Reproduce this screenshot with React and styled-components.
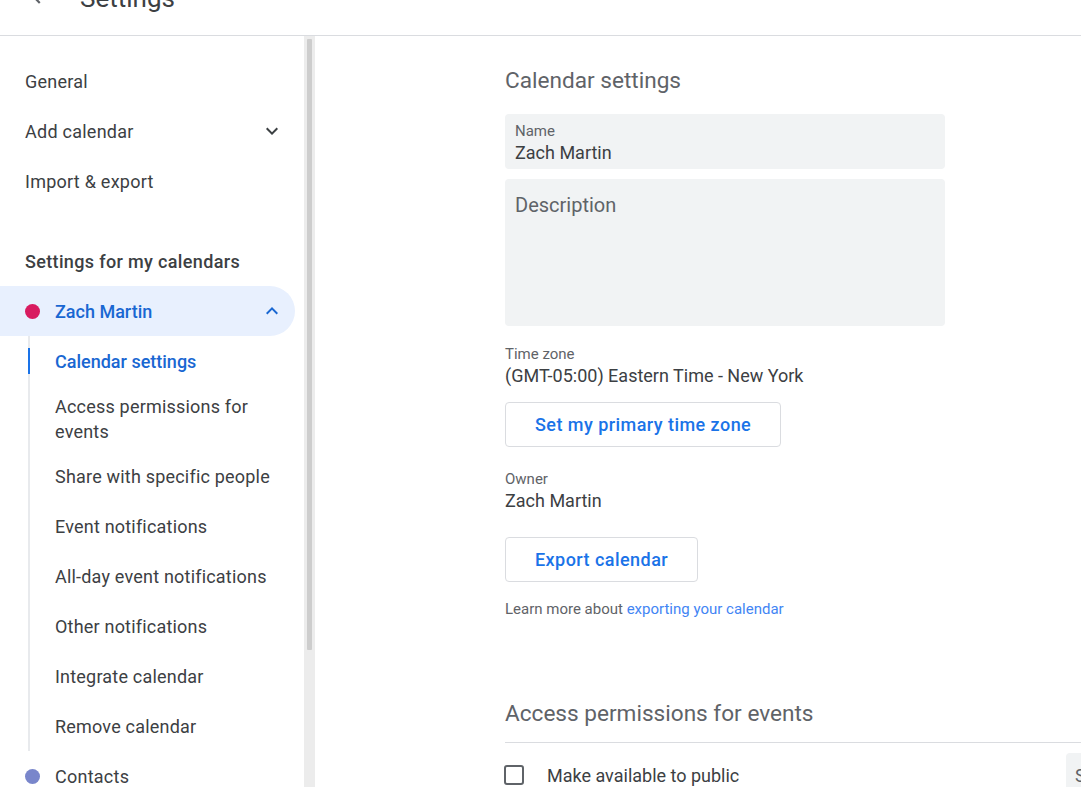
import React from "react";
import styled, { createGlobalStyle } from "styled-components";

const Global = createGlobalStyle`
  html, body { margin: 0; padding: 0; height: 100%; overflow: hidden; background: #fff; }
  body { font-family: Roboto, "Noto Sans", Arial, sans-serif; color: #3c4043; }
  #root { height: 100%; }
  * { box-sizing: border-box; }
`;

const Page = styled.div`
  height: 100vh;
  display: flex;
  flex-direction: column;
`;

const Header = styled.header`
  height: 36px;
  flex-shrink: 0;
  overflow: hidden;
  border-bottom: 1px solid #dadce0;
`;

const HeaderRow = styled.div`
  display: flex;
  align-items: center;
  height: 40px;
  margin-top: -22px;
  padding-left: 26px;
  gap: 28px;
`;

const BackIcon = styled.svg`
  width: 26px;
  height: 26px;
  fill: #5f6368;
  margin-bottom: 6px;
`;

const Title = styled.div`
  font-size: 26px;
  color: #3c4043;
`;

const Body = styled.div`
  flex: 1;
  display: flex;
  overflow: hidden;
`;

const Sidebar = styled.nav`
  width: 304px;
  flex-shrink: 0;
  padding-top: 20px;
`;

const Track = styled.div`
  width: 11px;
  flex-shrink: 0;
  background: #ececec;
  padding: 3px 3px 0 3px;
`;

const Thumb = styled.div`
  width: 5px;
  height: 611px;
  background: #cdcdcd;
  border-radius: 1px;
`;

const NavItem = styled.div`
  display: flex;
  align-items: center;
  min-height: 50px;
  padding: 7.5px ${(p) => (p.$selected ? 11 : 20)}px 7.5px 25px;
  font-size: 18px;
  line-height: 25px;
  letter-spacing: ${(p) => (p.$active ? 0 : p.$bold ? 0.35 : 0.25)}px;
  color: ${(p) => (p.$active ? "#1967d2" : "#3c4043")};
  font-weight: ${(p) => (p.$bold || p.$active ? 500 : 400)};
  margin-top: ${(p) => p.$gapTop || 0}px;
  background: ${(p) => (p.$selected ? "#e8f0fe" : "transparent")};
  border-radius: ${(p) => (p.$selected ? "0 25px 25px 0" : "0")};
  margin-right: ${(p) => (p.$selected ? 9 : 0)}px;
`;

const Dot = styled.span`
  width: 15px;
  height: 15px;
  border-radius: 50%;
  background: ${(p) => p.$color};
  flex-shrink: 0;
  margin-right: 15px;
`;

const Grow = styled.span`
  flex: 1;
`;

const Chevron = styled.svg`
  width: 24px;
  height: 24px;
  fill: ${(p) => p.$color || "#3c4043"};
`;

const SubList = styled.div`
  margin-left: 28px;
  border-left: 2px solid #e8eaed;
`;

const SubItem = styled.div`
  position: relative;
  display: flex;
  align-items: center;
  min-height: 50px;
  padding: 7.5px 20px 7.5px 25px;
  font-size: 18px;
  line-height: 25px;
  letter-spacing: ${(p) => (p.$active ? 0 : 0.2)}px;
  color: ${(p) => (p.$active ? "#1967d2" : "#3c4043")};
  font-weight: ${(p) => (p.$active ? 500 : 400)};
  &::before {
    content: "";
    display: ${(p) => (p.$active ? "block" : "none")};
    position: absolute;
    left: -2px;
    top: 12px;
    bottom: 12px;
    width: 2px;
    background: #1a73e8;
  }
`;

const Main = styled.main`
  flex: 1;
  overflow: hidden;
  padding: 31px 0 0 190px;
`;

const Section = styled.section`
  display: flex;
  flex-direction: column;
  align-items: flex-start;
  margin-top: ${(p) => p.$top || 0}px;
`;

const SectionTitle = styled.h2`
  margin: 0;
  font-size: 22.6px;
  line-height: 28px;
  font-weight: 400;
  color: #5f6368;
`;

const Field = styled.div`
  width: 440px;
  height: ${(p) => p.$h}px;
  background: #f1f3f4;
  border-radius: 4px;
  padding: ${(p) => p.$pt}px 10px 0 10px;
  margin-top: ${(p) => p.$mt}px;
`;

const Label = styled.div`
  font-size: 15px;
  line-height: ${(p) => p.$lh || 16}px;
  color: #5f6368;
  margin-top: ${(p) => p.$mt || 0}px;
`;

const Value = styled.div`
  font-size: 18px;
  line-height: ${(p) => p.$lh || 22}px;
  color: #3c4043;
  margin-top: ${(p) => p.$mt || 0}px;
`;

const Placeholder = styled.div`
  font-size: 20px;
  line-height: 24px;
  color: #5f6368;
`;

const OutlineButton = styled.button`
  height: 45px;
  padding: 0 29px;
  border: 1px solid #dadce0;
  border-radius: 4px;
  background: #fff;
  color: #1a73e8;
  font-family: Roboto, Arial, sans-serif;
  font-size: 18px;
  font-weight: 500;
  letter-spacing: 0.45px;
  margin-top: ${(p) => p.$mt}px;
  cursor: pointer;
`;

const Help = styled.div`
  font-size: 15px;
  line-height: 20px;
  color: #5f6368;
  margin-top: ${(p) => p.$mt}px;
  a { color: #4285f4; text-decoration: none; }
`;

const Divider = styled.div`
  align-self: stretch;
  height: 1px;
  background: #dadce0;
  margin-top: 14px;
`;

const CheckRow = styled.div`
  align-self: stretch;
  display: flex;
  align-items: center;
  height: 64px;
`;

const Box = styled.span`
  width: 20px;
  height: 20px;
  border: 2px solid #5f6368;
  border-radius: 3px;
  flex-shrink: 0;
  margin-left: -1px;
  margin-right: 23px;
`;

const CheckText = styled.span`
  font-size: 18px;
  color: #3c4043;
  flex: 1;
  white-space: nowrap;
`;

const SelectStub = styled.div`
  width: 160px;
  height: 50px;
  background: #f1f3f4;
  border-radius: 4px 0 0 4px;
  flex-shrink: 0;
  align-self: flex-start;
  margin-top: 10px;
  padding: 12px 9px;
  font-size: 18px;
  color: #5f6368;
  white-space: nowrap;
  overflow: hidden;
  margin-right: -145px;
`;

const Down = () => (
  <Chevron viewBox="0 0 24 24">
    <path d="M16.59 8.59L12 13.17 7.41 8.59 6 10l6 6 6-6z" />
  </Chevron>
);
const Up = () => (
  <Chevron viewBox="0 0 24 24" $color="#1967d2">
    <path d="M12 8l-6 6 1.41 1.41L12 10.83l4.59 4.58L18 14z" />
  </Chevron>
);

const subs = [
  "Calendar settings",
  "Access permissions for events",
  "Share with specific people",
  "Event notifications",
  "All-day event notifications",
  "Other notifications",
  "Integrate calendar",
  "Remove calendar",
];

export default function App() {
  return (
    <Page>
      <Global />
      <Header>
        <HeaderRow>
          <BackIcon viewBox="0 0 24 24">
            <path d="M20 11H7.83l5.59-5.59L12 4l-8 8 8 8 1.41-1.41L7.83 13H20v-2z" />
          </BackIcon>
          <Title>Settings</Title>
        </HeaderRow>
      </Header>
      <Body>
        <Sidebar>
          <NavItem>General</NavItem>
          <NavItem>
            <Grow>Add calendar</Grow>
            <Down />
          </NavItem>
          <NavItem>Import &amp; export</NavItem>
          <NavItem $bold $gapTop={30}>Settings for my calendars</NavItem>
          <NavItem $selected $active>
            <Dot $color="#d81b60" />
            <Grow>Zach Martin</Grow>
            <Up />
          </NavItem>
          <SubList>
            {subs.map((s, i) => (
              <SubItem key={s} $active={i === 0}>
                {s}
              </SubItem>
            ))}
          </SubList>
          <NavItem>
            <Dot $color="#7986cb" />
            Contacts
          </NavItem>
        </Sidebar>
        <Track>
          <Thumb />
        </Track>
        <Main>
          <Section>
            <SectionTitle>Calendar settings</SectionTitle>
            <Field $h={55} $pt={9} $mt={19}>
              <Label>Name</Label>
              <Value $mt={3}>Zach Martin</Value>
            </Field>
            <Field $h={147} $pt={14} $mt={10}>
              <Placeholder>Description</Placeholder>
            </Field>
            <Label $lh={18} $mt={19}>Time zone</Label>
            <Value $lh={24} $mt={1}>(GMT-05:00) Eastern Time - New York</Value>
            <OutlineButton $mt={14}>Set my primary time zone</OutlineButton>
            <Label $lh={18} $mt={23}>Owner</Label>
            <Value $lh={24} $mt={1}>Zach Martin</Value>
            <OutlineButton $mt={24}>Export calendar</OutlineButton>
            <Help $mt={17}>
              Learn more about <a href="#">exporting your calendar</a>
            </Help>
          </Section>
          <Section $top={81}>
            <SectionTitle>Access permissions for events</SectionTitle>
            <Divider />
            <CheckRow>
              <Box />
              <CheckText>Make available to public</CheckText>
              <SelectStub>See all event details</SelectStub>
            </CheckRow>
          </Section>
        </Main>
      </Body>
    </Page>
  );
}
